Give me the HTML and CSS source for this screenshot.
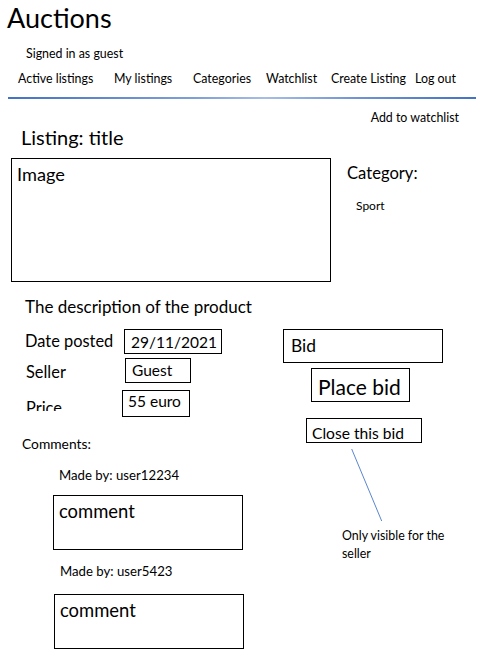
FILE: index.html
```html
<!DOCTYPE html>
<html lang="en">
<head>
<meta charset="utf-8">
<title>Auctions</title>
<link rel="stylesheet" href="styles.css">
</head>
<body>
<header class="site-header">
  <h1 class="brand">Auctions</h1>
  <p class="signed">Signed in as guest</p>
  <nav class="nav">
    <a class="nav-link" href="#">Active listings</a>
    <a class="nav-link" href="#">My listings</a>
    <a class="nav-link" href="#">Categories</a>
    <a class="nav-link" href="#">Watchlist</a>
    <a class="nav-link" href="#">Create Listing</a>
    <a class="nav-link" href="#">Log out</a>
  </nav>
</header>
<hr class="rule">
<main class="listing">
  <div class="watch-row"><a class="watch-link" href="#">Add to watchlist</a></div>
  <h2 class="title">Listing: title</h2>
  <section class="top-row">
    <div class="image-box">Image</div>
    <div class="category">
      <h3 class="category-label">Category:</h3>
      <p class="category-value">Sport</p>
    </div>
  </section>
  <p class="desc">The description of the product</p>
  <section class="lower-row">
    <div class="left-col">
      <div class="fact fact-date">
        <span class="fact-label">Date posted</span>
        <span class="fact-box box-date">29/11/2021</span>
      </div>
      <div class="fact fact-seller">
        <span class="fact-label label-seller">Seller</span>
        <span class="fact-box box-seller">Guest</span>
      </div>
      <div class="fact fact-price">
        <span class="fact-label label-price">Price</span>
        <span class="fact-box box-price">55 euro</span>
      </div>
      <p class="comments-title">Comments:</p>
      <p class="made-by made-by-1">Made by: user12234</p>
      <div class="comment-box comment-1">comment</div>
      <p class="made-by made-by-2">Made by: user5423</p>
      <div class="comment-box comment-2">comment</div>
    </div>
    <div class="right-col">
      <div class="bid-input">Bid</div>
      <div class="place-bid">Place bid</div>
      <div class="close-bid">Close this bid</div>
      <svg class="connector" width="32" height="73" viewBox="0 0 32 73" aria-hidden="true">
        <line x1="0.7" y1="0" x2="30.7" y2="72" stroke="#5b86d0" stroke-width="1"/>
      </svg>
      <p class="note">Only visible for the seller</p>
    </div>
  </section>
</main>
</body>
</html>
```
FILE: styles.css
```css
* { box-sizing: border-box; }
html, body { margin: 0; padding: 0; background: #fff; }
body {
  font-family: Lato, "Open Sans", sans-serif;
  color: #000;
  width: 482px;
  height: 665px;
  overflow: hidden;
}
a { color: #000; text-decoration: none; }
p, h1, h2, h3 { margin: 0; font-weight: 400; }

.site-header { padding-left: 7px; }
.brand { font-size: 27px; line-height: 34px; padding-top: 1px; }
.signed { font-size: 12.4px; line-height: 16px; margin: 11px 0 0 19px; }
.nav {
  display: grid;
  grid-template-columns: 96px 79px 73px 65px 84px auto;
  margin-top: 9px;
  padding-left: 11px;
  font-size: 12.4px;
  line-height: 16px;
  white-space: nowrap;
}

.rule {
  border: 0;
  height: 2px;
  margin: 10px 6px 0 8px;
  background: linear-gradient(90deg, #4472c4 0%, #7f9fd8 40%, #a7bde5 55%, #6f92d4 75%, #4472c4 100%);
}

.watch-row { text-align: right; padding-right: 23px; margin-top: 11px; font-size: 12.4px; line-height: 16px; }
.title { font-size: 20px; line-height: 24px; margin: -1px 0 0 21px; }

.top-row { display: flex; align-items: flex-start; margin-top: 9px; padding-left: 11px; }
.image-box {
  width: 320px; height: 124px;
  border: 1px solid #000;
  padding: 4px 0 0 5px;
  font-size: 18.2px; line-height: 22px;
}
.category { margin-left: 16px; }
.category-label { font-size: 16.6px; line-height: 20px; margin-top: 5px; }
.category-value { font-size: 12px; line-height: 16px; margin: 15px 0 0 9px; }

.desc { font-size: 17px; line-height: 20px; margin: 15px 0 0 25px; }

.lower-row { display: flex; align-items: flex-start; margin-top: 12px; }
.left-col { width: 283px; }

.fact { display: flex; align-items: flex-start; padding-left: 25px; }
.fact-seller { margin-top: 4px; }
.fact-price { margin-top: 7px; }
.fact-label { display: block; width: 99px; font-size: 16.4px; line-height: 20px; padding-top: 2px; }
.label-seller { padding: 4px 0 0 1px; }
.label-price { padding: 8px 0 0 1px; height: 21px; overflow: hidden; width: 97px; }
.fact-box {
  display: block;
  border: 1px solid #000;
  padding-left: 6px;
  font-size: 15.5px;
  white-space: nowrap;
}
.box-date { width: 98px; height: 25px; padding-top: 1px; line-height: 22px; }
.box-seller { width: 66px; height: 25px; line-height: 23px; margin-left: 1px; }
.box-price { width: 68px; height: 27px; line-height: 20px; padding-left: 5px; }

.comments-title { font-size: 13.8px; line-height: 17px; margin: 18px 0 0 22px; }
.made-by { font-size: 13.2px; line-height: 17px; }
.made-by-1 { margin: 15px 0 0 59px; }
.made-by-2 { margin: 13px 0 0 60px; }
.comment-box {
  width: 190px; height: 55px;
  border: 1px solid #000;
  padding: 4px 0 0 5px;
  font-size: 18.4px; line-height: 22px;
}
.comment-1 { margin: 11px 0 0 53px; }
.comment-2 { margin: 14px 0 0 54px; }

.right-col { width: 170px; }
.bid-input {
  width: 160px; height: 34px;
  border: 1px solid #000;
  padding: 4px 0 0 7px;
  font-size: 17.4px; line-height: 24px;
}
.place-bid {
  width: 99px; height: 34px;
  margin: 5px 0 0 28px;
  border: 1px solid #000;
  padding: 4px 0 0 6px;
  font-size: 21px; line-height: 28px;
}
.close-bid {
  width: 116px; height: 25px;
  margin: 16px 0 0 23px;
  border: 1px solid #000;
  padding: 5px 0 0 5px;
  font-size: 15.6px; line-height: 19px;
  white-space: nowrap;
}
.connector { display: block; margin: 6px 0 0 68px; }
.note { width: 118px; margin: 5px 0 0 59px; font-size: 12.4px; line-height: 18px; }
```
